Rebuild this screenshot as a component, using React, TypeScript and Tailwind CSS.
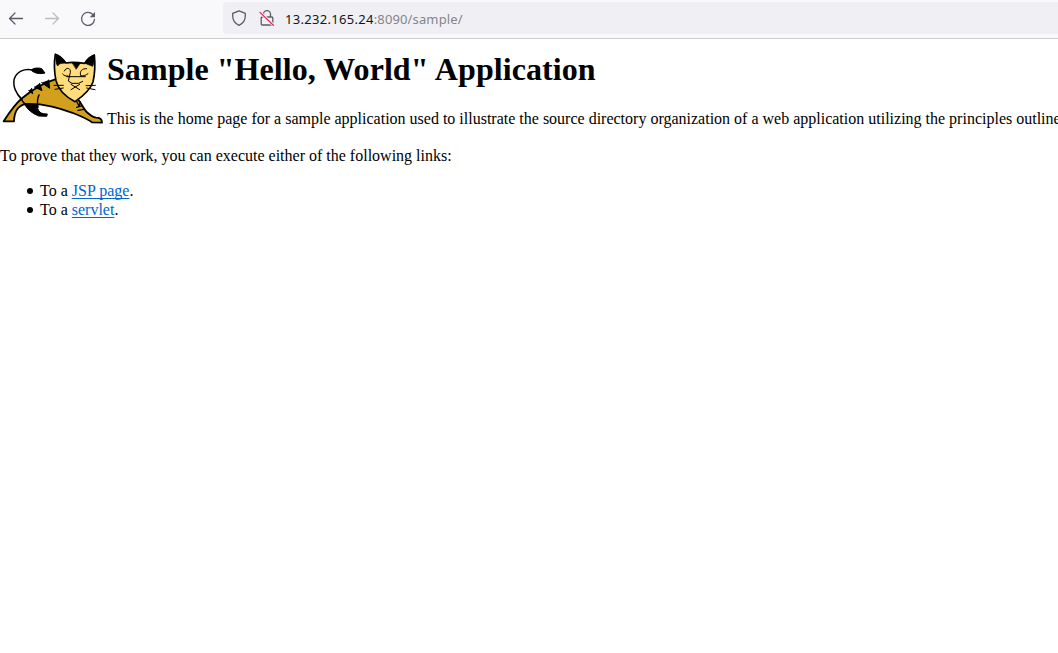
function Cat() {
  return (
    <svg className="block h-[82px] w-[107px] shrink-0" viewBox="0 0 321 246" fill="none" stroke="#000" strokeLinecap="round" strokeLinejoin="round">
      <path d="M11 226 C24 205 48 171 68 155 C100 129 135 109 172 98 C190 120 210 140 232 158 C241 167 252 190 260 198 C270 207 280 214 288 215 C298 215 306 220 306 230 L276 229 C258 216 234 207 216 200 C178 187 136 172 76 174 C52 180 43 196 42 226 Z" fill="#d2a01d" strokeWidth="5.5" />
      <path d="M60 156 L78 176 L112 175 C110 184 114 192 120 199 C126 203 134 204 142 204 L140 211 L116 210 C98 203 84 192 77 180 Z" fill="#000" strokeWidth="3" />
      <path d="M98 72 C71 67 50 77 43 98 C37 120 49 145 66 160" strokeWidth="4.5" />
      <path d="M96 70 C101 65 119 65 125 68 L135 81 C119 85 105 82 96 75 Z" fill="#000" strokeWidth="3" />
      <path d="M117 147 C111 159 111 168 114 184" strokeWidth="4.5" />
      <path d="M86 134 L98 143 L95 127 M103 123 L126 134 L119 112 M125 110 L149 127 L146 102" fill="#000" strokeWidth="3" />
      <path d="M230 166 L237 180 L241 168 M230 184 L246 179 M234 193 L252 190" strokeWidth="4" />
      <path d="M166 25 C162 48 163 80 168 104 C176 137 202 155 225 167 C244 154 270 133 279 108 C285 81 286 55 283 27 C272 31 260 42 254 52 C235 49 215 47 198 51 C190 41 179 28 166 25 Z" fill="#ffdc7c" strokeWidth="5" />
      <path d="M166 25 C180 29 192 40 197 51 C187 53 179 50 173 60 C166 52 169 39 166 25 Z M283 27 C270 31 259 42 255 52 L278 61 C284 50 281 39 283 27 Z M217 50 L241 51 L229 69 Z" fill="#000" strokeWidth="2" />
      <path d="M193 75 C199 62 213 66 211 79 L205 105 L216 112 H236 L248 106 M200 92 H256 M260 68 C246 67 238 76 242 89 C250 91 258 88 264 83 M188 84 C192 89 198 91 204 90 M213 131 L239 115 M213 115 L239 131" strokeWidth="3" />
      <path d="M162 118 L190 118 M165 130 L190 126 M258 119 L286 118 M260 126 L285 131" strokeWidth="3" />
    </svg>
  );
}

function BrowserBar() {
  return (
    <header className="flex h-[39px] items-start border-b border-[#cccccc] bg-[#f9f9fb]">
      <nav className="flex h-[38px] w-[223px] shrink-0 items-center gap-5 pl-2 text-[#5b5b66]">
        <svg className="size-4" viewBox="0 0 16 16" fill="none" stroke="currentColor" strokeWidth="1.3" strokeLinecap="round" strokeLinejoin="round">
          <path d="M14.5 7.5H1.5M7 2L1.5 7.5L7 13" />
        </svg>
        <svg className="size-4 text-[#bcbcc1]" viewBox="0 0 16 16" fill="none" stroke="currentColor" strokeWidth="1.3" strokeLinecap="round" strokeLinejoin="round">
          <path d="M1.5 7.5H14.5M9 2L14.5 7.5L9 13" />
        </svg>
        <svg className="size-4" viewBox="0 0 16 16" fill="none" stroke="currentColor" strokeWidth="1.3" strokeLinecap="round">
          <path d="M12.6 3.3A6.5 6.5 0 1 0 14.5 8.5" />
          <path d="M15 1V6.3H9.7Z" fill="currentColor" stroke="none" />
        </svg>
      </nav>
      <div className="mt-0.5 flex h-8 grow items-center rounded-l bg-[#f0f0f4] pl-2 text-[#5b5b66]">
        <svg className="size-4" viewBox="0 0 16 16" fill="none" stroke="currentColor" strokeWidth="1.3" strokeLinejoin="round">
          <path d="M8 .8L14.3 3.3V5.7C14.3 10 11.8 13.5 8 15.3C4.2 13.5 1.7 10 1.7 5.7V3.3Z" />
        </svg>
        <svg className="ml-3 size-4" viewBox="0 0 16 16" fill="none" stroke="currentColor" strokeWidth="1.3" strokeLinecap="round">
          <path d="M4.5 7V4.2A3.5 3.5 0 0 1 11.5 4.2V7M4.5 7H3.3Q2.2 7 2.2 8.1V13.9Q2.2 15 3.3 15H12.7Q13.8 15 13.8 13.9V8.1Q13.8 7 12.7 7H8" />
          <path d="M1 2.4L14.3 15.2" stroke="#f0f0f4" strokeWidth="3" />
          <path d="M1 2.4L14.3 15.2" stroke="#e22850" />
        </svg>
        <span className="ml-[10px] whitespace-nowrap pt-[2px] font-['Noto_Sans',sans-serif] text-[13px] leading-8 tracking-[0.13px] text-[#84848c]">
          <span className="tracking-[0.3px] text-[#15141a]">13.232.165.24</span>:8090/sample/
        </span>
      </div>
    </header>
  );
}

function LinkItem({ label }: { label: string }) {
  return (
    <li className="flex items-center gap-[7.5px]">
      <span className="mt-px size-1.5 rounded-full bg-black" />
      <span>
        To a <a href="#" className="text-[#0066cc] underline underline-offset-2 [text-decoration-skip-ink:none]">{label}</a>.
      </span>
    </li>
  );
}

export default function App() {
  return (
    <div className="h-[653px] overflow-hidden bg-white font-['Liberation_Serif',serif] text-[16px] leading-[19px] text-black">
      <BrowserBar />
      <main>
        <div className="flex pt-[7px]">
          <Cat />
          <div className="whitespace-nowrap pt-[5px]">
            <h1 className="text-[32px] font-bold leading-[37px] tracking-[0.06px]">Sample "Hello, World" Application</h1>
            <p className="mt-[21px]">
              This is the home page for a sample application used to illustrate the source directory organization of a web application utilizing the principles outlined
            </p>
          </div>
        </div>
        <p className="mt-[18px]">To prove that they work, you can execute either of the following links:</p>
        <ul className="mt-4 pl-[26.5px]">
          <LinkItem label="JSP page" />
          <LinkItem label="servlet" />
        </ul>
      </main>
    </div>
  );
}
